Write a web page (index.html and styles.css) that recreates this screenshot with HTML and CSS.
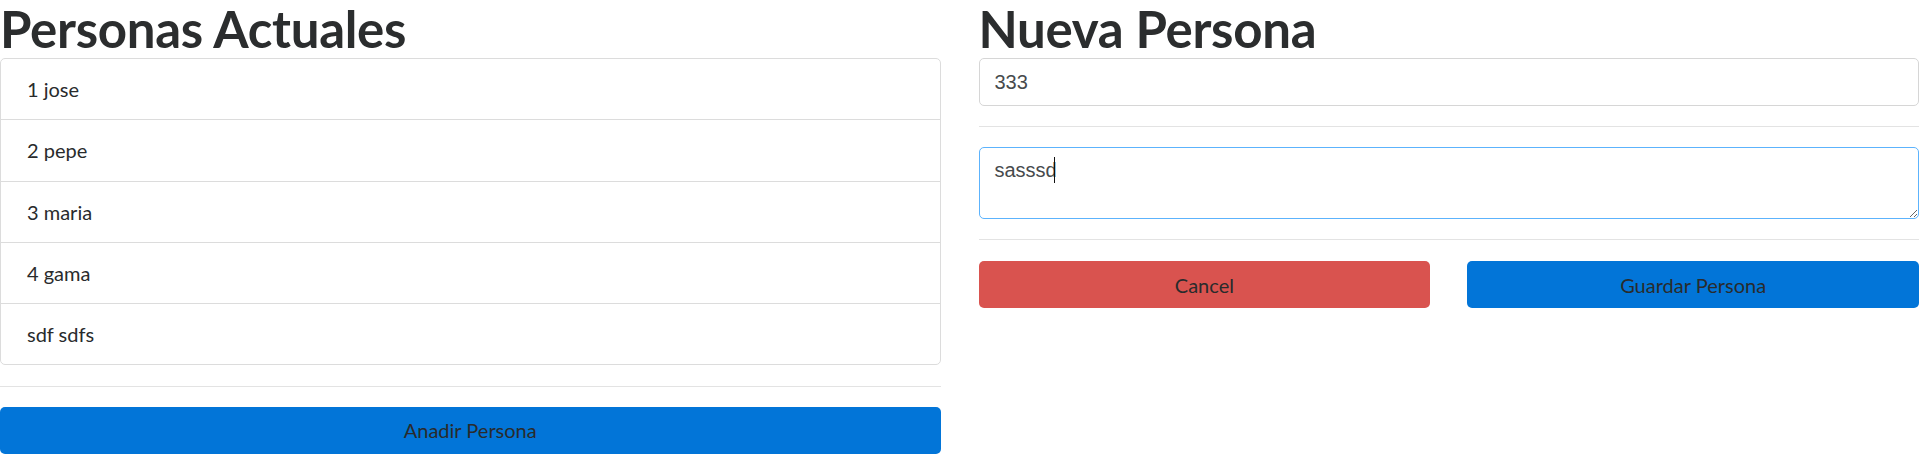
FILE: index.html
```html
<!DOCTYPE html>
<html lang="es">
<head>
<meta charset="utf-8">
<title>Personas</title>
<link rel="stylesheet" href="styles.css">
</head>
<body>
<main class="page">
  <section class="col">
    <h1 class="title">Personas Actuales</h1>
    <ul class="list">
      <li class="list-item">1 jose</li>
      <li class="list-item">2 pepe</li>
      <li class="list-item">3 maria</li>
      <li class="list-item">4 gama</li>
      <li class="list-item">sdf sdfs</li>
    </ul>
    <hr class="sep sep-list">
    <button class="btn btn-primary" type="button">Anadir Persona</button>
  </section>
  <section class="col">
    <h1 class="title">Nueva Persona</h1>
    <input class="field" type="text" value="333">
    <hr class="sep">
    <div class="area-wrap">
      <textarea class="field area" rows="2">sasssd</textarea>
      <span class="caret"></span>
    </div>
    <hr class="sep sep-area">
    <div class="btn-row">
      <button class="btn btn-danger" type="button">Cancel</button>
      <button class="btn btn-primary" type="button">Guardar Persona</button>
    </div>
  </section>
</main>
</body>
</html>
```

FILE: styles.css
```css
* { box-sizing: border-box; }
html, body { margin: 0; padding: 0; background: #fff; }
body {
  font-family: Lato, "Open Sans", sans-serif;
  font-size: 20px;
  color: #292b2c;
}
.page {
  display: grid;
  grid-template-columns: 1fr 1fr;
  column-gap: 38px;
}
.col { display: flex; flex-direction: column; min-width: 0; }
.title {
  margin: 0;
  font-size: 51px;
  font-weight: 700;
  line-height: 58px;
  color: #2b2d2e;
  letter-spacing: -0.3px;
}
.list {
  list-style: none;
  margin: 0;
  padding: 0;
  border: 1px solid #dcdcdc;
  border-radius: 5px;
}
.list-item {
  padding: 15px 25px 15.25px 26px;
  line-height: 30px;
  border-bottom: 1px solid #dcdcdc;
}
.list-item:last-child { border-bottom: 0; }
.sep {
  margin: 20px 0;
  border: 0;
  border-top: 1px solid #e3e3e3;
  height: 0;
}
.sep-list { margin-top: 20.5px; }
.sep-area { margin-top: 20.5px; margin-bottom: 21px; }
.btn {
  display: block;
  width: 100%;
  height: 47px;
  border: 1px solid transparent;
  border-radius: 5px;
  font-family: Lato, "Open Sans", sans-serif;
  font-size: 20px;
  color: #292b2c;
  padding: 0;
}
.btn-primary { background: #0275d8; }
.btn-danger { background: #d9534f; }
.btn-row {
  display: grid;
  grid-template-columns: 1fr 1fr;
  column-gap: 37px;
}
.field {
  display: block;
  width: 100%;
  height: 48px;
  padding: 10px 15px;
  border: 1px solid #d6d6d6;
  border-radius: 5px;
  font-family: "Liberation Sans", Arial, sans-serif;
  font-size: 20px;
  line-height: 25px;
  color: #464a4c;
  background: #fff;
  outline: none;
}
.area-wrap { position: relative; }
.area {
  height: 71.5px;
  border-color: #5cb3fd;
  resize: vertical;
}
.caret {
  position: absolute;
  left: 75px;
  top: 10px;
  width: 1px;
  height: 26px;
  background: #111;
}
```
